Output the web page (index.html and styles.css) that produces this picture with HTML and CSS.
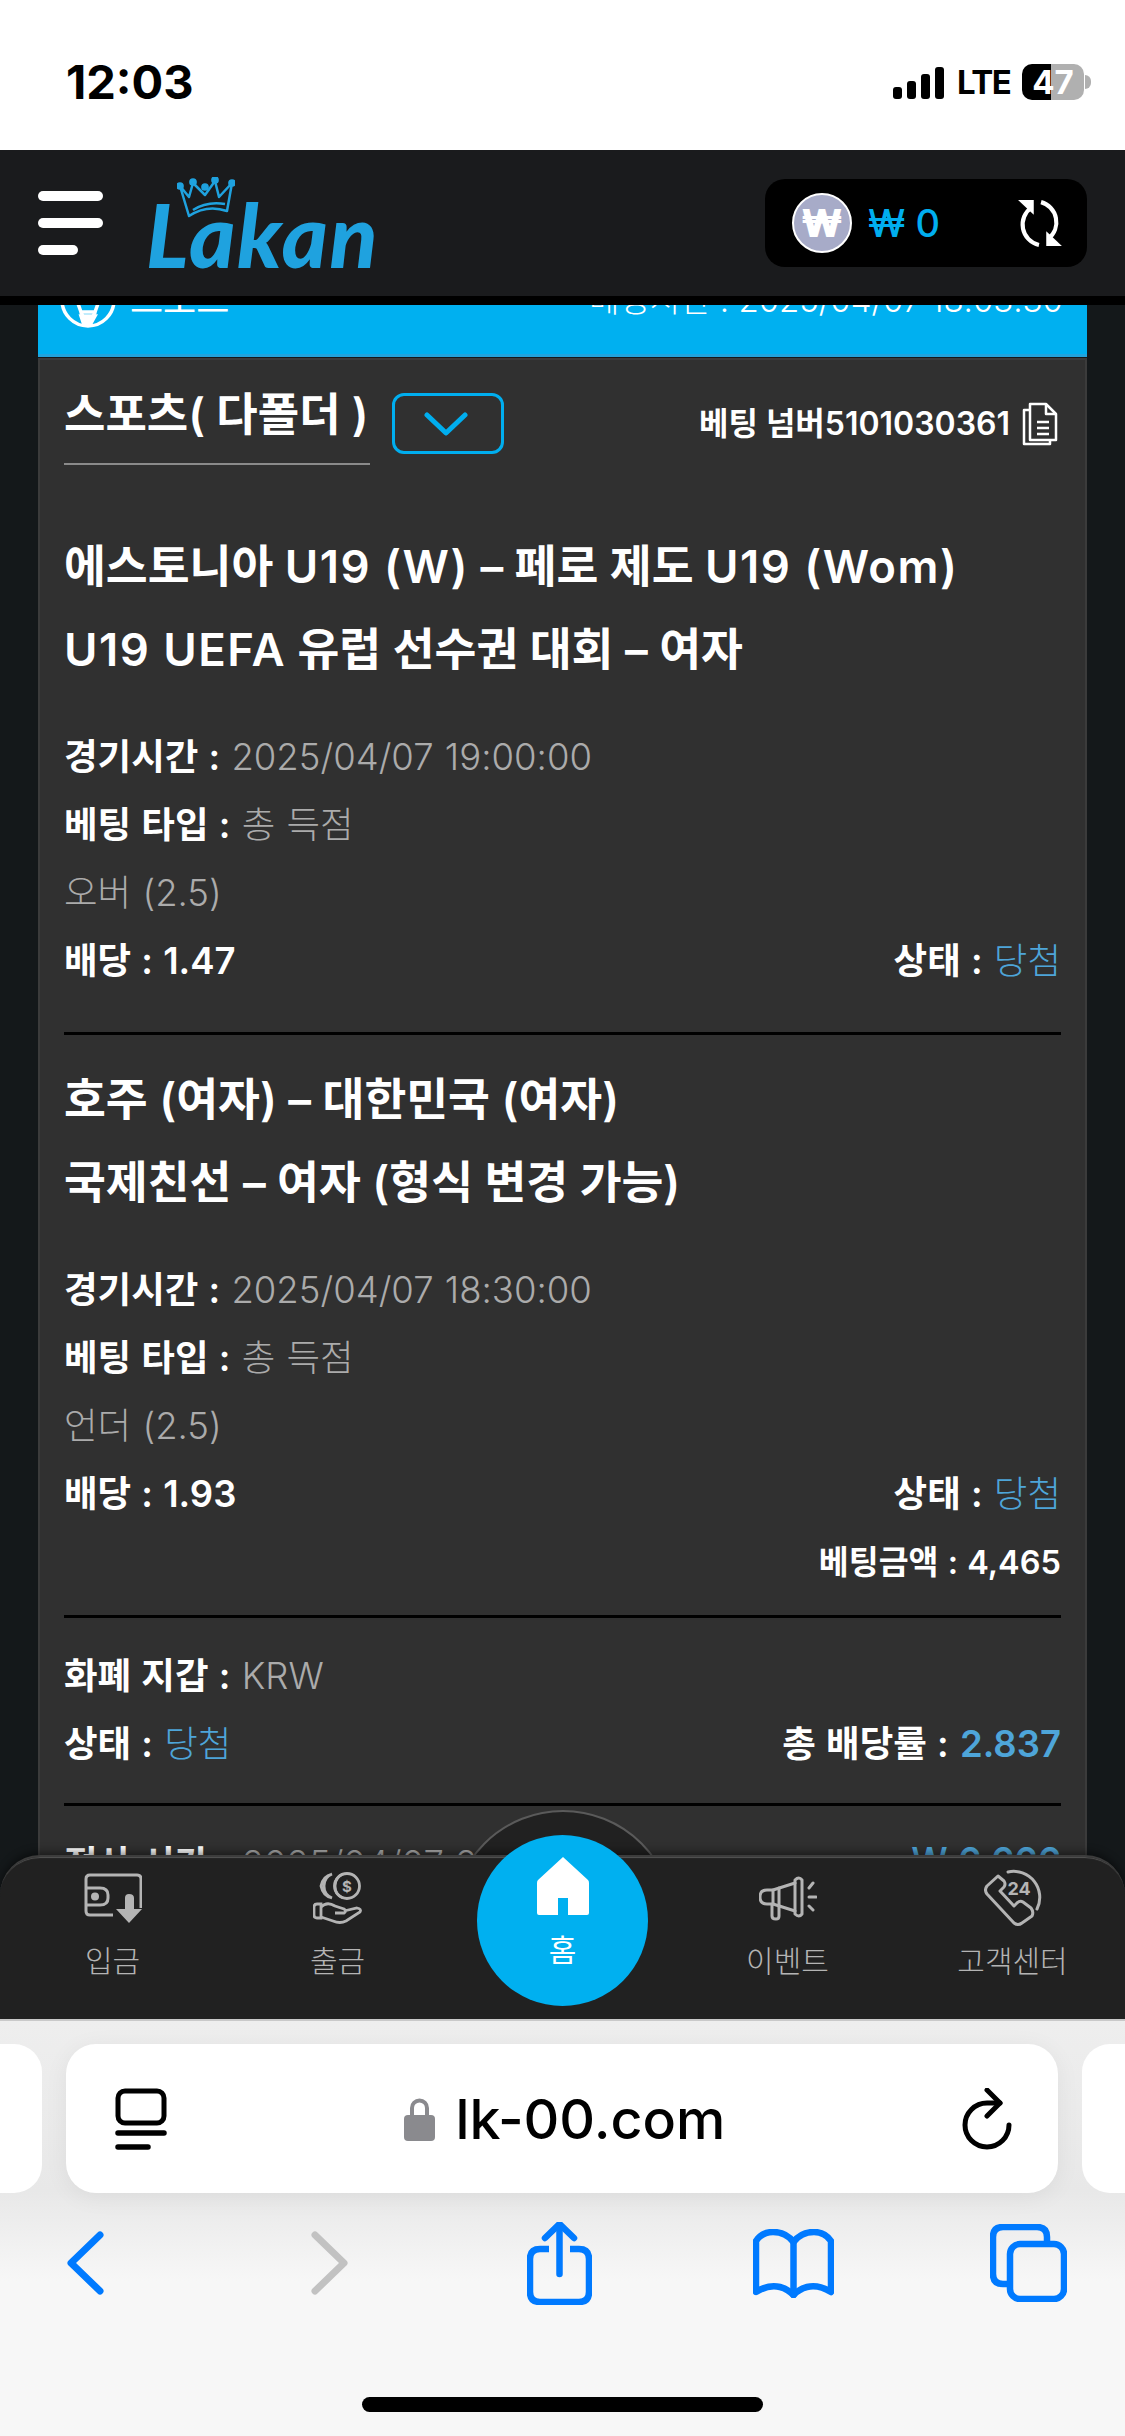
FILE: index.html
```html
<!DOCTYPE html>
<html lang="ko">
<head>
    <meta charset="UTF-8">
    <meta name="viewport" content="width=device-width, initial-scale=1.0">
    <title>Lakan - 베팅 내역</title>
    <link rel="stylesheet" href="styles.css">
</head>
<body>
<div class="phone">
    <!-- iOS status bar -->
    <div class="statusbar">
        <span class="clock">12:03</span>
        <div class="status-right">
            <svg class="signal" width="51" height="32" viewBox="0 0 51 32"><rect x="0" y="20" width="9" height="12" rx="3"/><rect x="14" y="14" width="9" height="18" rx="3"/><rect x="28" y="7" width="9" height="25" rx="3"/><rect x="42" y="0" width="9" height="32" rx="3"/></svg>
            <span class="lte">LTE</span>
            <div class="battery">47</div>
            <div class="battery-nub"></div>
        </div>
    </div>

    <!-- site header -->
    <header class="topbar">
        <div class="burger"><span></span><span></span><span class="short"></span></div>
        <div class="logo">
            <svg class="crown" width="58" height="42" viewBox="0 0 58 42" fill="none" stroke="#1fa2df" stroke-width="2.5" stroke-linejoin="round"><path d="M3 9 L12 20 L16 6 L28 18 L38 4 L42 20 L55 6 L50 34 Q30 27 12 39 Z"/><path d="M16 33 Q30 24 48 27" /><circle cx="3" cy="9" r="2.6" fill="#1fa2df"/><circle cx="16" cy="5" r="2.6" fill="#1fa2df"/><circle cx="28" cy="10" r="2.6" fill="#1fa2df"/><circle cx="38" cy="3" r="2.6" fill="#1fa2df"/><circle cx="55" cy="6" r="2.6" fill="#1fa2df"/></svg>
            <span class="logo-text">Lakan</span>
        </div>
        <div class="wallet">
            <div class="coin">₩</div>
            <span class="wallet-amount">₩ 0</span>
            <svg class="refresh" width="48" height="48" viewBox="0 0 46 46" fill="none" stroke="#fff" stroke-width="4"><path d="M15 8 A20 20 0 0 0 22 44"/><path d="M24 3 A20 20 0 0 1 31 38"/><path d="M2 1 H17 V15 Z" fill="#fff" stroke="none"/><path d="M44 45 H29 V31 Z" fill="#fff" stroke="none"/></svg>
        </div>
    </header>

    <main class="main">
        <div class="ticket-head">
            <div class="ticket-kind">
                <svg width="56" height="56" viewBox="0 0 56 56" fill="none" stroke="#fff" stroke-width="3.5"><circle cx="28" cy="28" r="26"/><path d="M28 17 L40 26 L35 40 L21 40 L16 26 Z"/><path d="M21 40 L26 52 M35 40 L30 52 M40 26 L53 24 M16 26 L3 24"/><path d="M21 44 L35 44 L30 53 L24 53 Z" fill="#fff"/></svg>
                <span>스포츠</span>
            </div>
            <span class="ticket-time">베팅시간 : 2025/04/07 18:03:30</span>
        </div>

        <section class="card">
            <div class="card-top">
                <span class="card-title">스포츠( 다폴더 )</span>
                <button class="toggle">
                    <svg width="44" height="24" viewBox="0 0 44 24" fill="none" stroke="#00aeef" stroke-width="5" stroke-linecap="round" stroke-linejoin="round"><path d="M3 3 L22 21 L41 3"/></svg>
                </button>
                <div class="bet-no">
                    <span>베팅 넘버5101030361</span>
                    <svg width="36" height="44" viewBox="0 0 36 44" fill="none" stroke="#fff" stroke-width="2.5" stroke-linejoin="round"><path d="M8 2 H24 L34 12 V38 H8 Z"/><path d="M24 2 V12 H34"/><path d="M8 8 H2 V42 H28 V38"/><path d="M15 20 H27 M15 26 H27 M15 32 H27"/></svg>
                </div>
            </div>

            <div class="match first">
                <h2 class="match-title">에스토니아 <span class="latin">U19 (W)</span> – 페로 제도 <span class="latin">U19 (Wom)</span><br><span class="latin">U19 UEFA</span> 유럽 선수권 대회 – 여자</h2>
                <div class="rows">
                    <div class="row"><span><b>경기시간 :</b> <i>2025/04/07 19:00:00</i></span></div>
                    <div class="row"><span><b>베팅 타입 :</b> <i>총 득점</i></span></div>
                    <div class="row"><i>오버 (2.5)</i></div>
                    <div class="row"><b>배당 : 1.47</b><span><b>상태 :</b> <i class="win">당첨</i></span></div>
                </div>
            </div>

            <div class="match">
                <h2 class="match-title">호주 (여자) – 대한민국 (여자)<br>국제친선 – 여자 (형식 변경 가능)</h2>
                <div class="rows">
                    <div class="row"><span><b>경기시간 :</b> <i>2025/04/07 18:30:00</i></span></div>
                    <div class="row"><span><b>베팅 타입 :</b> <i>총 득점</i></span></div>
                    <div class="row"><i>언더 (2.5)</i></div>
                    <div class="row"><b>배당 : 1.93</b><span><b>상태 :</b> <i class="win">당첨</i></span></div>
                    <div class="row end"><b class="small">베팅금액 : 4,465</b></div>
                </div>
            </div>

            <div class="summary">
                <div class="row"><span><b>화폐 지갑 :</b> <i>KRW</i></span></div>
                <div class="row"><span><b>상태 :</b> <i class="win">당첨</i></span><span><b>총 배당률 :</b> <b class="win">2.837</b></span></div>
            </div>

            <div class="summary last">
                <div class="row"><span><b>정산 시간 :</b> <i>2025/04/07 21:05:12</i></span><b class="win">₩ 6,666</b></div>
            </div>
        </section>

        <!-- bottom tab bar lies over the scrolled content -->
        <div class="nav-hump"></div>
        <nav class="nav">
            <a class="nav-item">
                <svg width="58" height="50" viewBox="0 0 58 50" fill="none" stroke="#b4b4b4" stroke-width="3"><path d="M29 42 H6 Q2 42 2 38 V6 Q2 2 6 2 H53 Q57 2 57 6 V35"/><path d="M2 15 H16 Q24 15 24 22 V25 Q24 32 16 32 H2"/><circle cx="11" cy="23.500" r="4" fill="#b4b4b4" stroke="none"/><path d="M41 25 Q41 21 45 21 Q50 21 50 25 V36 H58 L45 50 L32 36 H41 Z" fill="#b4b4b4" stroke="none"/></svg>
                <span>입금</span>
            </a>
            <a class="nav-item">
                <svg width="50" height="52" viewBox="0 0 50 52" fill="none" stroke="#b4b4b4" stroke-width="2.800"><circle cx="34" cy="14" r="12.500"/><path d="M30 2 A13 13 0 0 0 30 26 M19 2 A13 13 0 0 0 19 26 M19 2 Q10 4 8 14 Q10 24 19 26"/><path d="M1 35 Q1 32 4 32 H8 V46 H4 Q1 46 1 43 Z"/><path d="M8 35 Q14 29 22 34 L31 37 Q34 39 31 41 L22 41 M31 39 L44 36 Q49 37 47 40 L33 49 Q27 52 20 49 L8 45"/><text x="34" y="19.500" class="coin-mark">$</text></svg>
                <span>출금</span>
            </a>
            <a class="nav-item home">
                <svg width="52" height="58" viewBox="0 0 52 58"><path d="M26 0 L51 23 Q52 24 52 26 V56 Q52 58 50 58 H31 V41 H21 V58 H2 Q0 58 0 56 V26 Q0 24 1 23 Z" fill="#fff"/></svg>
                <span>홈</span>
            </a>
            <a class="nav-item">
                <svg width="58" height="44" viewBox="0 0 58 44" fill="none" stroke="#b4b4b4" stroke-width="3" stroke-linejoin="round" stroke-linecap="round"><path d="M36 4 Q40 0 43 4 V38 Q40 42 36 38 Z"/><path d="M36 7 L14 14 H8 Q1 14 1 21 Q1 28 8 28 H14 L36 35"/><path d="M14 14 V28 M20 12 V30"/><path d="M13 29 V40 Q13 43 17 43 Q20 43 20 40 V31"/><path d="M50 12 L54 7 M50 21 H57 M50 30 L54 34"/></svg>
                <span>이벤트</span>
            </a>
            <a class="nav-item">
                <svg width="58" height="58" viewBox="0 0 58 58" fill="none" stroke="#b4b4b4" stroke-width="3" stroke-linejoin="round"><path d="M24 3 A26 26 0 0 1 53 40" stroke-linecap="round"/><path d="M14 7 L3 17 Q0 21 3 25 L30 54 Q34 57 38 54 L48 47 Q50 43 47 39 L39 33 Q36 31 33 34 L30 37 L16 22 L20 18 Q22 15 20 12 Z"/><text x="35" y="26" class="phone-mark">24</text></svg>
                <span>고객센터</span>
            </a>
        </nav>
    </main>

    <!-- Safari bottom toolbar -->
    <footer class="safari">
        <div class="url-row">
            <div class="side-pill left"></div>
            <div class="url-pill">
                <svg width="52" height="62" viewBox="0 0 52 62" fill="none" stroke="#000" stroke-width="5"><rect x="3" y="3" width="46" height="32" rx="7"/><path d="M3 45 H49 M3 59 H33" stroke-linecap="round" stroke-width="5.500"/></svg>
                <div class="url">
                    <svg width="31" height="44" viewBox="0 0 31 44"><path d="M8 20 V11 A7.500 7.500 0 0 1 23 11 V20" fill="none" stroke="#8a8a8e" stroke-width="4"/><rect x="0" y="18" width="31" height="26" rx="4" fill="#8a8a8e"/></svg>
                    <span>lk-00.com</span>
                </div>
                <svg width="52" height="62" viewBox="0 0 52 62" fill="none" stroke="#000" stroke-width="5" stroke-linecap="round" stroke-linejoin="round"><path d="M47 37 A22 22 0 1 1 25 15 H38"/><path d="M25 2 L38 15 L25 28"/></svg>
            </div>
            <div class="side-pill right"></div>
        </div>
        <div class="safari-tools">
            <svg class="t-back" width="37" height="64" viewBox="0 0 37 64" fill="none" stroke="#007aff" stroke-width="7" stroke-linecap="round" stroke-linejoin="round"><path d="M33 4 L4 32 L33 60"/></svg>
            <svg class="t-fwd" width="37" height="64" viewBox="0 0 37 64" fill="none" stroke="#c2c2c2" stroke-width="7" stroke-linecap="round" stroke-linejoin="round"><path d="M4 4 L33 32 L4 60"/></svg>
            <svg class="t-share" width="65" height="83" viewBox="0 0 65 83" fill="none" stroke="#007aff" stroke-width="6.500"><path d="M22 27 H13 Q3 27 3 37 V70 Q3 80 13 80 H52 Q62 80 62 70 V37 Q62 27 52 27 H43"/><path d="M32.500 52 V3" stroke-linecap="round"/><path d="M18 16 L32.500 2 L47 16" stroke-linecap="round" stroke-linejoin="round"/></svg>
            <svg class="t-book" width="81" height="69" viewBox="0 0 81 69" fill="none" stroke="#007aff" stroke-width="6.500" stroke-linecap="round" stroke-linejoin="round"><path d="M40.500 13 Q33 3 20 3 Q9 3 3 12 V63 Q16 55 27 58 Q35 60 40.500 66 Q46 60 54 58 Q65 55 78 63 V12 Q72 3 61 3 Q48 3 40.500 13 Z"/><path d="M40.500 13 V66"/></svg>
            <svg class="t-tabs" width="77" height="78" viewBox="0 0 77 78" fill="none" stroke="#007aff" stroke-width="6.500"><path d="M18 60 H13 Q3 60 3 50 V13 Q3 3 13 3 H47 Q57 3 57 13 V20"/><rect x="20" y="20" width="54" height="55" rx="10"/></svg>
        </div>
        <div class="home-indicator"></div>
    </footer>
</div>
</body>
</html>
```

FILE: styles.css
```css
* {
    box-sizing: border-box;
}
body {
    margin: 0;
    font-family: Inter, "Noto Sans CJK KR", sans-serif;
    background: #14181a;
}
.phone {
    width: 1125px;
    height: 2436px;
    display: flex;
    flex-direction: column;
    overflow: hidden;
}

/* status bar */
.statusbar {
    height: 150px;
    background: #fff;
    flex: none;
    display: flex;
    justify-content: space-between;
    align-items: flex-start;
    padding: 56px 34px 0 66px;
}
.clock {
    font-size: 47px;
    line-height: 52px;
    font-weight: 700;
    color: #000;
}
.status-right {
    display: flex;
    align-items: center;
    padding-top: 8px;
}
.signal {
    fill: #000;
    margin-top: 2px;
}
.lte {
    width: 53px;
    font-size: 33px;
    line-height: 36px;
    font-weight: 700;
    letter-spacing: -1.500px;
    color: #000;
    margin: 0 12px 0 13px;
}
.battery {
    width: 62px;
    height: 36px;
    border-radius: 10px;
    background: linear-gradient(to right, #000 47%, #b0b0b0 47%);
    color: #fff;
    font-size: 33px;
    line-height: 36px;
    font-weight: 700;
    text-align: center;
}
.battery-nub {
    width: 6px;
    height: 14px;
    margin-left: 1px;
    border-radius: 0 6px 6px 0;
    background: #b0b0b0;
}

/* header */
.topbar {
    height: 155px;
    flex: none;
    background: #1a1b1d;
    border-bottom: 9px solid #000;
    display: flex;
    align-items: center;
    padding: 0 38px;
}
.burger {
    width: 65px;
    display: flex;
    flex-direction: column;
    gap: 17px;
}
.burger span {
    display: block;
    height: 10px;
    border-radius: 5px;
    background: #fff;
}
.burger .short {
    width: 40px;
}
.logo {
    position: relative;
    margin-left: 45px;
    width: 232px;
    height: 92px;
}
.crown {
    position: absolute;
    left: 29px;
    top: 0;
    z-index: 1;
}
.logo-text {
    position: absolute;
    left: -2px;
    bottom: -10px;
    font-family: Lato, sans-serif;
    font-weight: 900;
    font-style: italic;
    font-size: 88px;
    line-height: 90px;
    letter-spacing: 1.500px;
    color: #1fa2df;
}
.wallet {
    margin-left: auto;
    width: 322px;
    height: 88px;
    background: #000;
    border-radius: 20px;
    display: flex;
    align-items: center;
    padding: 0 23px 0 27px;
}
.coin {
    width: 60px;
    height: 60px;
    border-radius: 50%;
    background: #a7abc8;
    border: 2px solid #fff;
    color: #fff;
    font-size: 38px;
    line-height: 56px;
    font-weight: 900;
    text-align: center;
}
.wallet-amount {
    margin-left: 16px;
    font-size: 38px;
    font-weight: 500;
    color: #00aeef;
}
.refresh {
    margin-left: auto;
}

/* content */
.main {
    flex: 1;
    position: relative;
    overflow: hidden;
    padding: 0 38px;
    background: #14181a;
}
.ticket-head {
    height: 110px;
    margin-top: -58px;
    background: #00b0f0;
    border-bottom: 3px solid #22a3dc;
    display: flex;
    justify-content: space-between;
    align-items: flex-start;
    padding: 25px 24px 0 22px;
    color: #fff;
    font-size: 36px;
    line-height: 56px;
}
.ticket-kind {
    display: flex;
    gap: 14px;
}
.ticket-time {
    font-size: 33px;
    font-weight: 300;
}
.card {
    margin-top: 1px;
    height: 1800px;
    background: #303030;
    border: 2px solid #3b3b3b;
    padding: 0 24px;
}
.card-top {
    height: 108px;
    display: flex;
    align-items: flex-start;
}
.card-title {
    width: 306px;
    height: 105px;
    padding-top: 27px;
    border-bottom: 2px solid #8a8a8a;
    color: #fff;
    font-size: 45px;
    line-height: 56px;
    font-weight: 600;
    white-space: nowrap;
}
.toggle {
    width: 112px;
    height: 61px;
    margin: 33px 0 0 22px;
    background: transparent;
    border: 3px solid #00aeef;
    border-radius: 12px;
    padding: 4px 4px 0 0;
}
.bet-no {
    margin: 42px 3px 0 auto;
    display: flex;
    align-items: center;
    gap: 12px;
    color: #fff;
    font-size: 32px;
    line-height: 44px;
    font-weight: 600;
}
.match {
    border-top: 3px solid #000;
    padding-top: 23px;
    height: 583px;
}
.match.first {
    border-top: 0;
    padding-top: 57px;
    height: 564px;
}
.match-title {
    margin: 0;
    color: #fff;
    font-size: 45.500px;
    line-height: 83px;
    font-weight: 600;
    white-space: nowrap;
}
.latin {
    letter-spacing: 1.500px;
}
.rows {
    margin-top: 29px;
}
.row {
    height: 68px;
    display: flex;
    justify-content: space-between;
    align-items: center;
    font-size: 36.500px;
    word-spacing: 1px;
    color: #fff;
    white-space: nowrap;
}
.row.end {
    justify-content: flex-end;
}
.row b {
    font-weight: 600;
}
.row b.small {
    font-size: 32.500px;
}
.row i {
    font-style: normal;
    font-weight: 300;
    color: #ababab;
}
.row .win {
    color: #4ea5d9;
}
.summary {
    border-top: 3px solid #000;
    padding-top: 21px;
    height: 188px;
}
.summary.last {
    height: 100px;
}

/* bottom tabs */
.nav-hump {
    position: absolute;
    left: 451px;
    bottom: -15px;
    width: 224px;
    height: 224px;
    border-radius: 50%;
    background: #212121;
    border: 2px solid #5a5a5a;
}
.nav {
    position: absolute;
    left: 0;
    right: 0;
    bottom: 0;
    height: 164px;
    background: #212121;
    border-top: 2px solid #3c3c3c;
    border-radius: 40px 40px 0 0;
    box-shadow: 0 -3px 8px rgba(0,0,0,0.45), inset 0 2px 1px -1px #555;
    display: grid;
    grid-template-columns: repeat(5, 1fr);
}
.nav-item {
    height: 130px;
    padding-top: 12px;
    display: flex;
    flex-direction: column;
    align-items: center;
    justify-content: flex-start;
    gap: 12px;
    color: #b4b4b4;
    font-size: 30px;
    line-height: 44px;
    font-weight: 300;
}
.nav-item svg {
    height: 58px;
}
.nav-item.home {
    width: 171px;
    height: 171px;
    justify-self: center;
    margin-top: -22px;
    padding-top: 22px;
    gap: 13px;
    border-radius: 50%;
    background: #00b0f0;
    color: #fff;
    font-weight: 400;
    position: relative;
}
.coin-mark {
    font-size: 15px;
    font-weight: 700;
    fill: #b4b4b4;
    stroke: none;
    text-anchor: middle;
}
.phone-mark {
    font-size: 18px;
    font-weight: 700;
    fill: #b4b4b4;
    stroke: none;
    text-anchor: middle;
}

/* safari */
.safari {
    height: 417px;
    flex: none;
    border-top: 2px solid #c9c9c9;
    background: linear-gradient(to bottom, #eeeeee 0, #e8e8e8 170px, #f7f7f7 260px);
}
.url-row {
    display: flex;
    gap: 24px;
    padding-top: 23px;
}
.side-pill {
    width: 42px;
    height: 149px;
    background: #fff;
    flex: none;
}
.side-pill.left {
    border-radius: 0 28px 28px 0;
}
.side-pill.right {
    width: 43px;
    border-radius: 28px 0 0 28px;
}
.url-pill {
    flex: 1;
    height: 149px;
    background: #fff;
    border-radius: 30px;
    box-shadow: 0 4px 24px rgba(0,0,0,0.06);
    display: flex;
    justify-content: space-between;
    align-items: center;
    padding: 0 44px 0 49px;
}
.url {
    display: flex;
    align-items: center;
    gap: 21px;
    color: #000;
    font-size: 55.500px;
    font-weight: 500;
    line-height: 60px;
}
.safari-tools {
    display: flex;
    align-items: center;
    height: 84px;
    margin-top: 28px;
    padding-left: 67px;
}
.t-fwd {
    margin-left: 207px;
}
.t-share {
    margin-left: 179px;
}
.t-book {
    margin-left: 161px;
}
.t-tabs {
    margin-left: 156px;
}
.home-indicator {
    width: 401px;
    height: 15px;
    margin: 92px auto 0;
    border-radius: 8px;
    background: #000;
}
```
